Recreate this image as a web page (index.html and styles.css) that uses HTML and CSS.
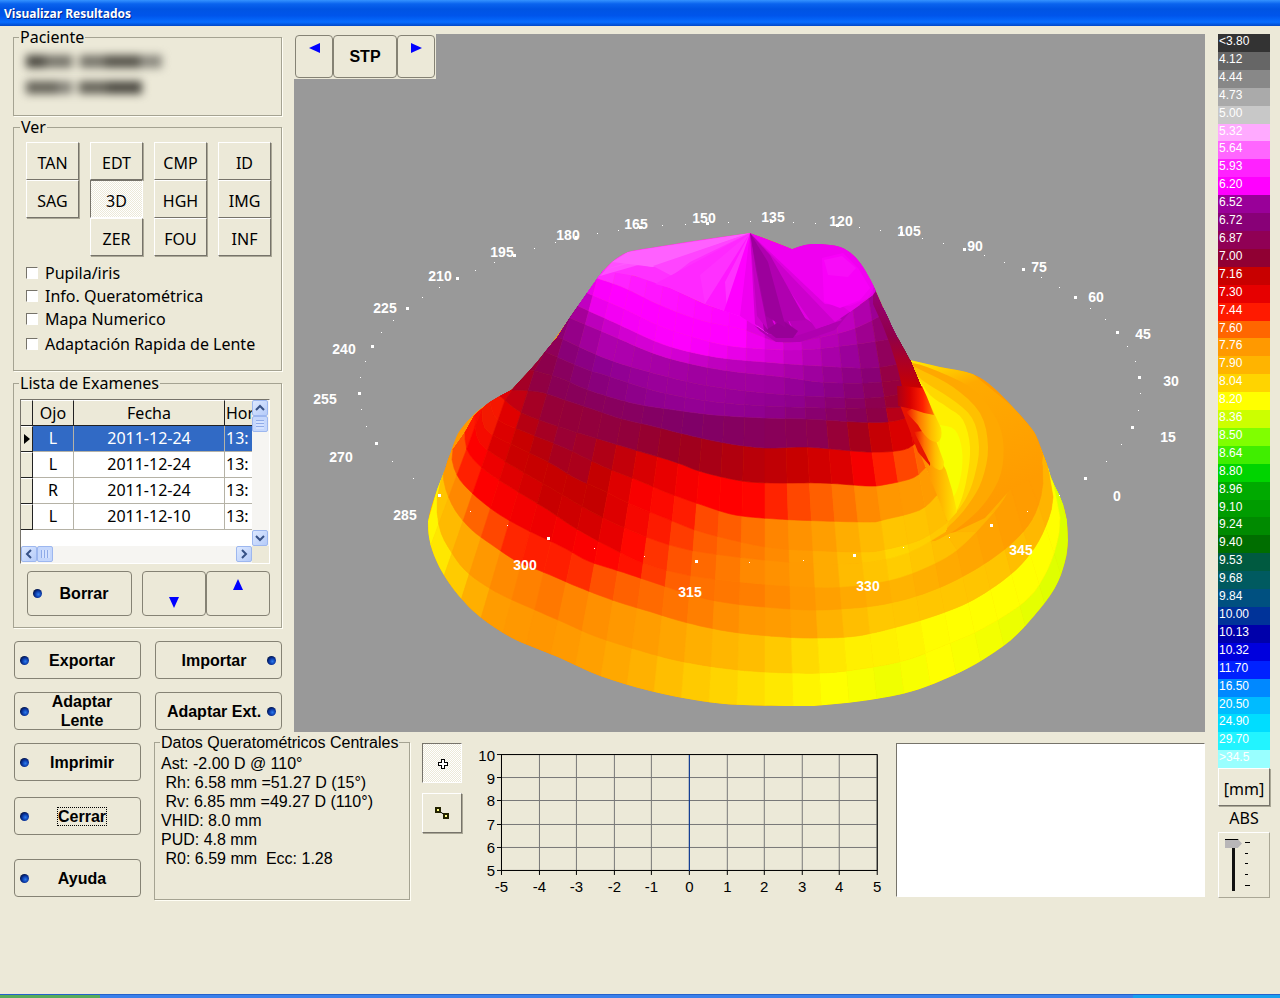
FILE: index.html
```html
<!DOCTYPE html>
<html lang="es">
<head>
<meta charset="utf-8">
<title>Visualizar Resultados</title>
<link rel="stylesheet" href="styles.css">
</head>
<body>
<header class="titlebar">Visualizar Resultados</header>
<main class="app">
  <div class="workspace">
    <div class="upper">
      <aside class="sidebar">
        <fieldset class="group patient">
          <legend>Paciente</legend>
          <div class="hidden-name hidden-name-long"></div>
          <div class="hidden-name"></div>
        </fieldset>
        <fieldset class="group views">
          <legend>Ver</legend>
          <div class="view-grid">
            <button>TAN</button><button>EDT</button><button>CMP</button><button>ID</button>
            <button>SAG</button><button class="pressed" aria-pressed="true">3D</button><button>HGH</button><button>IMG</button>
            <span></span><button>ZER</button><button>FOU</button><button>INF</button>
          </div>
          <div class="checks">
            <label><input type="checkbox">Pupila/iris</label>
            <label><input type="checkbox">Info. Queratométrica</label>
            <label><input type="checkbox">Mapa Numerico</label>
            <label class="last"><input type="checkbox">Adaptación Rapida de Lente</label>
          </div>
        </fieldset>
        <fieldset class="group exams">
          <legend>Lista de Examenes</legend>
          <div class="listbox">
            <div class="table-clip">
              <table>
                <thead><tr><th class="mark"></th><th class="eye">Ojo</th><th class="date">Fecha</th><th class="hour">Hor</th></tr></thead>
                <tbody>
                  <tr class="selected"><th class="mark"><svg width="6" height="10" viewBox="0 0 6 10"><path d="M0 0L6 5L0 10z"/></svg></th><td>L</td><td>2011-12-24</td><td class="hour">13:</td></tr>
                  <tr><th class="mark"></th><td>L</td><td>2011-12-24</td><td class="hour">13:</td></tr>
                  <tr><th class="mark"></th><td>R</td><td>2011-12-24</td><td class="hour">13:</td></tr>
                  <tr><th class="mark"></th><td>L</td><td>2011-12-10</td><td class="hour">13:</td></tr>
                </tbody>
              </table>
            </div>
            <div class="scroll vertical">
              <button aria-label="Subir"><svg viewBox="0 0 10 10"><path d="M1 7L5 3L9 7"/></svg></button>
              <span class="thumb"></span><span class="rail"></span>
              <button aria-label="Bajar"><svg viewBox="0 0 10 10"><path d="M1 3L5 7L9 3"/></svg></button>
            </div>
            <div class="scroll horizontal">
              <button aria-label="Izquierda"><svg viewBox="0 0 10 10"><path d="M7 1L3 5L7 9"/></svg></button>
              <span class="thumb"></span><span class="rail"></span>
              <button aria-label="Derecha"><svg viewBox="0 0 10 10"><path d="M3 1L7 5L3 9"/></svg></button>
            </div>
          </div>
          <div class="exam-actions">
            <button class="btn"><i class="led"></i><span>Borrar</span></button>
            <div class="pair">
              <button class="btn low" aria-label="Siguiente"><svg width="10" height="11" viewBox="0 0 10 11"><path d="M0 0H10L5 11z"/></svg></button>
              <button class="btn high" aria-label="Anterior"><svg width="10" height="11" viewBox="0 0 10 11"><path d="M0 11H10L5 0z"/></svg></button>
            </div>
          </div>
        </fieldset>
        <div class="side-actions">
          <button class="btn"><i class="led"></i><span>Exportar</span></button>
          <button class="btn right"><span>Importar</span><i class="led"></i></button>
          <button class="btn"><i class="led"></i><span>Adaptar<br>Lente</span></button>
          <button class="btn right"><span>Adaptar Ext.</span><i class="led"></i></button>
        </div>
      </aside>
      <section class="viewer">
        <svg class="map" id="map" viewBox="294 34 911 698" role="img" aria-label="Mapa corneal 3D"></svg>
        <div class="map-tools">
          <button class="btn arrow" aria-label="Girar a la izquierda"><svg width="11" height="10" viewBox="0 0 11 10"><path d="M11 0V10L0 5z"/></svg></button>
          <button class="btn stop">STP</button>
          <button class="btn arrow" aria-label="Girar a la derecha"><svg width="11" height="10" viewBox="0 0 11 10"><path d="M0 0V10L11 5z"/></svg></button>
        </div>
      </section>
    </div>
    <div class="lower">
      <div class="main-actions">
        <button class="btn"><i class="led"></i><span>Imprimir</span></button>
        <button class="btn close"><i class="led"></i><span><span class="focus">Cerrar</span></span></button>
        <button class="btn help"><i class="led"></i><span>Ayuda</span></button>
      </div>
      <fieldset class="group kerato">
        <legend>Datos Queratométricos Centrales</legend>
        <pre>Ast: -2.00 D @ 110°
 Rh: 6.58 mm =51.27 D (15°)
 Rv: 6.85 mm =49.27 D (110°)
VHID: 8.0 mm
PUD: 4.8 mm
 R0: 6.59 mm  Ecc: 1.28</pre>
      </fieldset>
      <div class="tools">
        <button class="pressed" aria-label="Punto"><svg width="11" height="11" viewBox="0 0 11 11"><path d="M4 1H7V4H10V7H7V10H4V7H1V4H4z" fill="#fff" stroke="#000" shape-rendering="crispEdges"/></svg></button>
        <button aria-label="Línea"><svg width="16" height="14" viewBox="0 0 16 14"><path d="M4 4L12 10" stroke="#000"/><path d="M2 2H6V6H2zM10 8H14V12H10z" fill="#ff8" stroke="#220" stroke-width="2"/></svg></button>
      </div>
      <svg class="chart" id="chart" viewBox="474 744 410 152" role="img" aria-label="Perfil"></svg>
      <div class="notes"></div>
    </div>
  </div>
  <aside class="scale">
    <ol id="scale"></ol>
    <button class="unit">[mm]</button>
    <label for="abs">ABS</label>
    <div class="slider">
      <input id="abs" type="range" min="0" max="4" value="0">
      <svg width="8" height="52" viewBox="0 0 8 52"><path d="M1 3.500H6M1 14.500H4M1 24.500H4M1 35.500H4M1 46.500H6" stroke="#000"/></svg>
    </div>
  </aside>
</main>
<footer class="taskbar"><span class="start"></span><span class="tasks"></span><span class="tray"></span></footer>
<script src="map.js"></script>
</body>
</html>
```
FILE: styles.css
```css
* { box-sizing: border-box; }
body { margin: 0; min-height: 100vh; display: flex; flex-direction: column; background: #ece9d8; color: #000; font: 16px/18px "Noto Sans", "Open Sans", sans-serif; }
button { font: inherit; color: inherit; padding: 0; margin: 0; }
.titlebar { height: 26px; padding-left: 4px; color: #fff; font: bold 12px/27px "Noto Sans", sans-serif; text-shadow: 1px 1px #00258c; background: linear-gradient(#3593ff, #0a63ee 15%, #0054e3 35%, #0055eb 60%, #066cff 85%, #0047c8); }
.app { flex: 1; display: flex; padding: 0 10px 0 13px; gap: 13px; }
.workspace { flex: 1; min-width: 0; }
.upper { display: flex; gap: 12px; }
.sidebar { width: 269px; padding-top: 2px; flex: none; }
.group { margin: 0; min-width: 0; border: 1px solid #a5a392; box-shadow: 1px 1px #fffef5; padding: 0; }
.group legend { margin-left: 5px; padding: 0 1px; height: 18px; white-space: nowrap; }
.patient { height: 88px; }
.hidden-name { width: 116px; height: 13px; margin: 13px 0 0 12px; filter: blur(4px); background: linear-gradient(90deg, #66645a 0 28%, #85837a 28% 40%, #dedbca 40% 46%, #66645a 46% 70%, #4c4a42 70%); }
.hidden-name-long { width: 136px; margin-top: 9px; background: linear-gradient(90deg, #4c4a42 0 14%, #77756b 14% 34%, #dedbca 34% 40%, #77756b 40% 58%, #55534a 58% 84%, #8c8a80 84%); }
.views { margin-top: 2px; height: 253px; padding: 6px 10px 0 12px; }
.group.views legend { margin-left: -6px; }
.view-grid { display: grid; grid-template-columns: repeat(4, 53px); grid-auto-rows: 38px; justify-content: space-between; }
.view-grid button, .unit, .tools button { background: #ece9d8; border: 1px solid; border-color: #fff #76736a #76736a #fff; box-shadow: 1px 1px #aaa796; border-radius: 0; }
.view-grid button { padding-top: 3px; }
.view-grid .pressed, .tools .pressed { border-color: #76736a #fff #fff #76736a; background: repeating-conic-gradient(#fff 0 25%, #ece9d8 0 50%) 0 0 / 2px 2px; box-shadow: none; }
.checks { padding-top: 5px; }
.checks label { display: flex; align-items: center; height: 23px; gap: 7px; white-space: nowrap; }
.checks .last { margin-top: 2px; }
.checks input { appearance: none; width: 12px; height: 12px; margin: 0; background: #fff; border: 1px solid; border-color: #76736a #fff #fff #76736a; }
.exams { margin-top: 3px; height: 254px; padding: 7px 11px 0 6px; }
.group.exams legend { margin-left: -1px; }
.listbox { display: grid; grid-template-columns: 1fr 17px; grid-template-rows: 146px 17px; height: 165px; border: 1px solid; border-color: #76736a #fff #fff #76736a; }
.table-clip { overflow: hidden; background: #fff; }
table { border-collapse: separate; border-spacing: 0; table-layout: fixed; width: 260px; }
th, td { height: 26px; padding: 0 0 1px; text-align: center; font-weight: normal; border-right: 1px solid #b5b2a6; border-bottom: 1px solid #b5b2a6; }
th { background: #ece9d8; border-color: #222; border-top: 1px solid #fff; }
.mark { width: 12px; }
.mark svg { display: block; margin: 0 auto; }
.eye { width: 41px; }
.date { width: 151px; }
.hour { text-align: left; padding-left: 1px; }
.selected td { background: #316ac5; color: #fff; }
.scroll { display: flex; background: #f6f5f2; }
.vertical { flex-direction: column; }
.scroll button, .thumb { width: 16px; height: 16px; flex: none; border: 1px solid #9db7ef; border-radius: 2px; background: linear-gradient(135deg, #dce8ff, #b5cbf9); display: grid; place-items: center; }
.scroll svg { width: 10px; fill: none; stroke: #365186; stroke-width: 2; }
.rail { flex: 1; }
.vertical .thumb { background: repeating-linear-gradient(#8fabe8 0 1px, #d4e2ff 1px 3px) center / 8px 9px no-repeat, #c5d7fc; }
.horizontal .thumb { background: repeating-linear-gradient(90deg, #8fabe8 0 1px, #d4e2ff 1px 3px) center / 9px 8px no-repeat, #c5d7fc; }
.btn { display: flex; align-items: center; height: 38px; padding: 0 5px; border: 1px solid #858274; border-radius: 4px; background: #ece9d8; font: bold 16px/19px "Liberation Sans", Arial, sans-serif; white-space: nowrap; }
.btn > span { flex: 1; text-align: center; }
.btn > svg { fill: #00f; }
.led { width: 9px; height: 9px; flex: none; border-radius: 50%; background: radial-gradient(circle at 60% 60%, #2c7cf0, #08329c 45%, #02123f 75%); }
.exam-actions { display: flex; justify-content: space-between; padding: 7px 0 0 7px; }
.exam-actions .btn { width: 105px; height: 45px; }
.exam-actions .pair { display: flex; }
.exam-actions .pair .btn { width: 64px; justify-content: center; padding: 7px 0; }
.pair .low { align-items: flex-end; }
.pair .high { align-items: flex-start; }
.side-actions { display: grid; grid-template-columns: 127px 127px; justify-content: space-between; gap: 13px 0; padding: 13px 0 0 1px; }
.viewer { position: relative; flex: 1; min-width: 0; margin-top: 8px; background: #999; }
.map { display: block; width: 100%; height: 698px; }
.map text { font: bold 14px "Liberation Sans", Arial, sans-serif; fill: #fff; text-anchor: middle; }
.map-tools { position: absolute; top: 0; left: 0; display: flex; padding: 1px; background: #ece9d8; }
.map-tools .btn { width: 38px; height: 43px; justify-content: center; }
.map-tools .btn.stop { width: 64px; }
.map-tools .arrow { align-items: flex-start; padding-top: 7px; }
.lower { display: flex; align-items: flex-start; gap: 12px; padding: 1px 0 0 1px; }
.main-actions { width: 127px; flex: none; padding-top: 10px; margin-right: 1px; display: flex; flex-direction: column; }
.main-actions .close { margin-top: 16px; }
.main-actions .help { margin-top: 24px; }
.focus { outline: 1px dotted #000; }
.kerato { width: 256px; height: 167px; flex: none; font: 16px/19px "Liberation Sans", Arial, sans-serif; }
.kerato pre { margin: 3px 0 0 6px; font: inherit; }
.tools { display: grid; gap: 10px; padding-top: 10px; flex: none; }
.tools button { width: 40px; height: 40px; display: grid; place-items: center; }
.chart { flex: 4; min-width: 0; height: 152px; margin-top: 11px; }
.chart text { font: 15px "Liberation Sans", Arial, sans-serif; }
.notes { flex: 3; height: 154px; margin-top: 10px; background: #fff; border: 1px solid; border-color: #76736a #fff #fff #76736a; }
.scale { width: 52px; flex: none; padding-top: 8px; display: flex; flex-direction: column; align-items: center; }
.scale ol { list-style: none; margin: 0; padding: 0; width: 100%; height: 734px; display: flex; flex-direction: column; }
.scale li { flex: 1; padding-left: 1px; color: #fff; font: 12px/14px "Liberation Sans", Arial, sans-serif; }
.unit { width: 52px; height: 38px; padding-top: 3px; }
.scale label { height: 26px; line-height: 24px; }
.slider { width: 52px; height: 66px; display: flex; align-items: center; padding-left: 6px; gap: 2px; border: 1px solid; border-color: #fff #aaa796 #aaa796 #fff; }
.slider input { appearance: none; writing-mode: vertical-lr; width: 17px; height: 52px; margin: 0; background: linear-gradient(#111, #111) center / 3px 100% no-repeat; }
.slider input::-webkit-slider-thumb { appearance: none; width: 17px; height: 9px; background: #b8b6b8; border-top: 1px solid #000; clip-path: polygon(0 0, 75% 0, 100% 50%, 75% 100%, 0 100%); }
.taskbar { height: 4px; display: flex; background: #3a80ea; border-top: 1px solid #2461cc; }
.start { width: 100px; background: #58ab5a; }
.tasks { flex: 1; }
.tray { width: 147px; background: #19a0ee; }
```
FILE: map.js
```js
const NS = 'http://www.w3.org/2000/svg';
function add(parent, tag, attrs, text) {
  const el = document.createElementNS(NS, tag);
  for (const k in attrs) el.setAttribute(k, attrs[k]);
  if (text !== undefined) el.textContent = text;
  parent.appendChild(el);
  return el;
}
const parse = s => s.trim().split(/\s+/).map(p => p.split(',').map(Number));
const show = pts => pts.map(q => q.map(v => v.toFixed(1)).join(',')).join(' ');
const map = document.getElementById('map');

/* Catmull-Rom value between b and c */
const spline = (a, b, c, d, t) => 0.5 * (2 * b + (c - a) * t + (2 * a - 5 * b + 4 * c - d) * t * t + (3 * b - a - 3 * c + d) * t * t * t);
function smooth(pts) {
  const out = [];
  for (let i = 0; i < pts.length - 1; i++) {
    const a = pts[Math.max(0, i - 1)], b = pts[i], c = pts[i + 1], d = pts[Math.min(pts.length - 1, i + 2)];
    for (let t = 0; t < 1; t += 0.25) out.push([0, 1].map(n => spline(a[n], b[n], c[n], d[n], t)));
  }
  out.push(pts[pts.length - 1]);
  return out;
}

/* Outline of the whole surface, in runs that meet at sharp corners */
const outline = show([
  '750,233 700,240 650,248 628,252 612,262 600,275 590,289 568,320 545,352 530,370 511,390',
  '511,390 490,402 475,413 460,430 453,445 444,472 435,495 429,515 428,530 432,550 442,572 458,595 480,617 510,637 540,650 560,658 600,676 650,691 700,701 740,705 800,706 826,705 870,700 910,692 943,680 976,664 1010,641 1035,615 1055,588 1065,562 1068,540 1066,515 1060,497 1052,480 1042,450 1033,430 1013,407 993,387 973,374 940,367 910,360',
  '910,360 895,333 883,307 873,285 863,267 853,255 840,247 820,244 805,245 792,249',
  '792,249 770,240 750,233'
].flatMap(s => smooth(parse(s))));
const defs = add(map, 'defs', {});
add(add(defs, 'clipPath', { id: 'body' }), 'polygon', { points: outline });
function gradient(id, stops, dir) {
  const g = add(defs, 'linearGradient', Object.assign({ id }, dir));
  stops.forEach(([o, c]) => add(g, 'stop', { offset: o, 'stop-color': c }));
}
gradient('flank', [[0, '#aa0018'], [0.35, '#d80000'], [0.7, '#ff2000'], [1, '#ff7700']], {});
gradient('lobe', [[0, '#ee1100'], [0.35, '#ff7700'], [0.7, '#ffbb00'], [1, '#ffe400']], {});
gradient('slope', [[0, '#ff7700'], [0.5, '#ffaa00'], [1, '#ffe400']], {});
gradient('back', [[0, '#ffff00'], [0.3, '#ffaa00'], [1, '#ff9900']], { x1: 0, y1: 0, x2: 0.3, y2: 1 });
gradient('edge', [[0, '#980080'], [0.5, '#900048'], [1, '#c80000']], { x1: 0, y1: 0, x2: 0, y2: 1 });

/* Ring boundaries from the rim towards the apex, and the colours along each ring */
const rings = [
  ['444,472 435,495 429,515 428,530 432,550 442,572 458,595 480,617 510,637 540,650 560,658 600,676 650,691 700,701 740,705 800,706 826,705 870,700 910,692 943,680 976,664 1010,641 1035,615 1055,588 1065,562 1068,540 1066,515 1060,497 1052,480',
   '428:ffff00 446:ffdd00 470:ffb400 500:ff9900 550:ff9600 590:ffa000 640:ffb000 690:ffc800 735:ffd800 790:ffec00 830:ffff00 890:f0ff00 940:ffff00 1000:f0ff00 1060:dcff00'],
  ['443,470 437,500 440,530 452,553 468,573 498,593 542,613 565,623 592,635 628,647 675,660 722,668 765,672 823,673 867,668 907,660 940,647 980,630 1023,603 1042,580 1055,550 1060,517 1052,477',
   '437:ffc800 455:ffb400 475:ffa000 500:ff8c00 550:ff7800 580:ff8800 610:ff9600 660:ffa000 700:ffb000 765:ffc000 810:ffdd00 850:fff000 900:fff200 940:ffff00 1050:ffff00'],
  ['443,470 445,487 455,510 472,530 495,547 518,562 538,570 562,580 578,587 615,601 648,611 688,623 732,632 783,637 820,638 857,636 897,627 937,615 973,600 1010,575 1033,550 1047,523 1053,497 1048,467',
   '443:ffa000 460:ff8800 475:ff6600 500:ff4000 520:ff1e00 575:ff1e00 590:ff4800 625:ff6000 690:ff7800 740:ff9600 800:ffa000 840:ffb800 880:ffc800 1000:ffc400 1045:ffb400'],
  ['453,450 452,460 458,477 472,493 497,513 525,529 548,540 568,550 588,561 622,572 655,583 698,597 735,604 777,608 810,610 840,609 880,605 920,595 960,578 1000,553 1027,527 1040,500 1043,470 1036,440',
   '452:ff8800 458:ff5500 466:ff2800 480:ff0000 540:ee0000 600:ff0000 640:ff1800 665:ff5500 700:ff7000 760:ff8000 800:ff9600 850:ffa800 900:ffb400 1000:ffa000 1040:ff9900'],
  ['465,433 467,450 482,468 510,487 548,510 575,528 615,550 648,565 692,576 740,582 790,586 840,587 890,580 927,567 957,550 987,520 1007,493 1013,463 1008,425',
   '465:ff3300 475:ff0000 500:e60000 550:c80000 600:d80000 630:ff0000 665:ff4400 700:ff6600 750:ff8800 800:ff9900 850:ffbb00 900:ffcc00 950:ffbe00 1010:ff9c00'],
  ['475,415 478,440 498,457 542,483 592,512 625,528 660,542 700,552 765,560 823,564 870,562 910,552 945,532',
   '477:ff1000 495:dd0000 520:c80000 600:c40000 630:f40000 665:ff2000 700:ff5800 740:ff7400 780:ff8c00 820:ffa800 860:ffc000 900:ffd800 940:ffc800'],
  ['482,409 486,430 515,446 550,463 575,478 602,490 628,503 665,518 695,530 732,540 773,548 823,551 863,552 883,550 920,540 948,522',
   '482:ff3000 495:e60000 530:c00000 570:a00028 600:c40000 640:f80000 680:ff1000 700:ff4400 740:ff6600 780:ff8800 820:ff9c00 860:ffb400 900:ffc800 940:ffbe00'],
  ['490,402 498,420 530,434 565,448 602,466 642,482 668,493 702,505 735,515 777,519 823,521 873,522 883,520 920,510 937,495',
   '490:ff2000 510:e00000 530:b00014 570:980038 610:b40010 650:dd0000 700:ff0000 750:ff0000 780:ff2800 805:ff5000 840:ff7000 880:ff9600 935:ff9c00'],
  ['500,396 520,412 548,423 575,432 602,440 635,450 675,462 702,472 742,481 773,483 823,483 867,486 883,485 913,478 925,468',
   '500:ee0000 522:b00018 550:960038 620:900040 680:9c0020 740:b4000c 800:c80000 850:e00000 870:ff0000 895:ff3000 922:ff6600'],
  ['512,390 540,392 565,400 592,409 622,419 648,425 688,435 725,443 765,448 807,447 867,452 903,450 917,442',
   '512:c00000 530:960038 560:880058 620:880060 690:800068 760:88005c 820:8c0050 862:a80018 885:cc0000 917:e60000'],
  ['530,370 560,378 588,390 632,403 668,409 715,415 765,418 807,419 857,422 887,422 907,418 917,414',
   '530:a00028 548:8a0050 590:880078 650:900090 700:940094 760:900090 800:8a0078 855:880058 885:900040 905:d00000 930:ff2000'],
  ['545,352 588,370 602,374 635,385 668,394 715,402 765,406 823,408 873,408 905,407 928,403',
   '545:980038 560:880070 600:8c0090 650:9a009a 720:9a009a 790:900090 850:880068 890:900040 910:b40010'],
  ['558,337 602,357 635,368 680,380 715,387 765,393 823,397 873,398 922,390',
   '558:880068 578:980090 610:b000b0 655:a800a8 700:a000a0 770:a000a0 820:8c0090 870:880068 910:a00020'],
  ['570,318 615,337 645,350 675,360 722,370 783,377 820,382 867,383 917,378',
   '570:900070 585:b400b4 620:d000d0 670:d800d8 710:c000c0 770:b400b4 820:9c009c 870:880078 905:a00020'],
  ['578,306 620,325 665,345 715,357 765,362 820,366 873,368 910,361',
   '578:b000b0 600:f000f0 680:ff00ff 720:f000f0 770:d800d8 810:b800b8 860:940094 900:900040'],
  ['587,293 620,307 665,328 715,343 750,348 800,350 850,345 898,338',
   '587:e000e0 605:ff00ff 740:ff00ff 765:e400e4 805:c400c4 850:a800a8 890:900068'],
  ['597,278 625,288 660,305 700,320 745,330 775,341 800,341 850,330 886,313',
   '597:ff30ff 640:ff18ff 740:ff00ff 765:d000d0 800:b400b4 850:c000c0 880:980090'],
  ['604,270 635,276 670,288 705,304 745,318 768,334 790,337 830,324 873,295', '']
].map(([pts, cols]) => ({
  pts: smooth(parse(pts)),
  cols: cols ? cols.split(' ').map(c => {
    const [x, h] = c.split(':');
    return [Number(x), [0, 2, 4].map(i => parseInt(h.slice(i, i + 2), 16))];
  }) : []
}));

/* Even steps along a polyline */
function byLength(pts, n) {
  if (pts.length < 2) return Array(n + 1).fill(pts[0]);
  const len = [0];
  for (let i = 1; i < pts.length; i++) len.push(len[i - 1] + Math.hypot(pts[i][0] - pts[i - 1][0], pts[i][1] - pts[i - 1][1]));
  const out = [];
  let j = 1;
  for (let k = 0; k <= n; k++) {
    const d = len[len.length - 1] * k / n;
    while (j < pts.length - 1 && len[j] < d) j++;
    const t = (d - len[j - 1]) / (len[j] - len[j - 1] || 1);
    out.push([0, 1].map(m => pts[j - 1][m] + t * (pts[j][m] - pts[j - 1][m])));
  }
  return out;
}
/* Meridians fan out from a far point above the surface */
const slope = p => (p[0] - 765) / (p[1] + 350);
function byMeridian(pts, n) {
  const out = [];
  let j = 1;
  for (let k = 0; k <= n; k++) {
    const s = -0.4 + 0.8 * k / n;
    while (j < pts.length - 1 && slope(pts[j]) < s) j++;
    const s0 = slope(pts[j - 1]), s1 = slope(pts[j]);
    const t = Math.max(0, Math.min(1, (s - s0) / (s1 - s0)));
    out.push([0, 1].map(m => pts[j - 1][m] + t * (pts[j][m] - pts[j - 1][m])));
  }
  return out;
}
const FINE = 4;
function resample(pts) {
  let l = 0, r = 0;
  pts.forEach((p, i) => {
    if (slope(p) < slope(pts[l])) l = i;
    if (slope(p) > slope(pts[r])) r = i;
  });
  return byLength(pts.slice(0, l + 1), 3 * FINE)
    .concat(byMeridian(pts.slice(l, r + 1), 30 * FINE).slice(1))
    .concat(byLength(pts.slice(r), 3 * FINE).slice(1));
}
function colourAt(cols, x) {
  let i = 1;
  while (i < cols.length - 1 && cols[i][0] < x) i++;
  const [x0, a] = cols[i - 1], [x1, b] = cols[i];
  const t = Math.max(0, Math.min(1, (x - x0) / (x1 - x0)));
  return `rgb(${a.map((v, n) => Math.round(v + t * (b[n] - v))).join(',')})`;
}
const surface = add(map, 'g', { 'clip-path': 'url(#body)' });
add(surface, 'polygon', { points: outline, fill: '#ff9900' });
const poly = (points, fill) => add(surface, 'polygon', { points, fill });

function drawRing(i) {
  const a = resample(rings[i].pts), b = resample(rings[i + 1].pts);
  for (let s = 0; s + FINE < a.length; s += FINE) {
    const e = s + FINE;
    const c = colourAt(rings[i].cols, (a[s + 2][0] + b[s + 2][0]) / 2);
    add(surface, 'polygon', { points: show(a.slice(s, e + 1).concat(b.slice(s, e + 1).reverse())), fill: c, stroke: c, 'stroke-width': 0.6 });
  }
}
for (let i = 0; i < 5; i++) drawRing(i);

/* Hollow on the right-hand side */
poly('900,350 973,374 1013,407 1035,433 1043,455 1041,475 1010,490 985,518 955,532 930,538 900,500', 'url(#back)');
const bowl = (points, fill) => poly(show(smooth(parse(points))), fill);
bowl('905,362 927,367 970,387 993,413 1003,440 1001,473 987,500 968,520 945,536 925,538 900,490', '#ffa800');
bowl('905,362 925,372 953,387 980,413 988,447 982,480 968,505 950,525 935,532 905,480', '#ffc000');
bowl('905,362 922,380 950,398 972,418 979,447 974,478 965,500 952,516 935,524 905,470', '#ffd800');
bowl('905,370 915,374 930,395 947,407 963,420 970,447 967,477 960,503 951,513 930,490 905,440', '#fff000');
bowl('940,425 955,430 962,450 961,475 954,496 945,490 940,460', '#f8ff00');
for (let i = 5; i < rings.length - 1; i++) drawRing(i);

/* Folds along the steep right flank */
const path = (d, fill) => add(surface, 'path', { d, fill });
path('M915 440L925 466L937 495L948 522L957 512Q953 490 946 470L930 440z', 'url(#slope)');
path('M900 405H924L932 434L930 466L918 452z', '#e81400');
path('M914 432L926 455Q931 468 939 470Q944 471 944 462L932 430z', 'url(#lobe)');
path('M906 412L918 425Q928 443 938 442Q943 438 941 428L928 400z', 'url(#lobe)');
path('M897 386L922 386L927 397L934 415Q922 413 912 409L898 406z', 'url(#flank)');
path('M873 284L883 307L895 333L910 360L922 388L902 386Q893 345 873 304z', 'url(#edge)');

/* Apex: narrow facets that meet in one point */
poly('735,305 760,331 776,342 800,342 835,330 850,312', '#b000b0');
poly('750,233 700,236 650,244 620,250 600,270 635,276 670,288 705,304 745,318 768,334', '#ff30ff');
poly('750,233 792,249 815,240 850,247 880,285 873,295 830,324 790,337 768,334', '#e000e0');
[['600,276 612,262 628,252 650,248', '#ff50ff'], ['604,270 628,262 652,267', '#ff58ff'], ['628,252 612,262 653,267', '#ff60ff'],
 ['653,266 672,276 690,262', '#ff44ff'], ['655,284 670,288 705,304 700,275', '#ff28ff'],
 ['705,304 727,312 725,282', '#ff18ff'], ['724,311 745,318 748,321', '#ff00ff'],
 ['740,316 757,327 757,300', '#f000f0'], ['755,324 769,334 775,332', '#d000d0'],
 ['764,331 769,334 781,336 773,322', '#a400a4'], ['779,336 800,335 790,325', '#a800a8'],
 ['796,336 820,328 805,318', '#b800b8'], ['816,329 842,320 830,309', '#cc00cc'],
 ['835,322 860,305 845,295', '#dd00dd'], ['850,312 873,295 873,280 792,249', '#e800e8']
].forEach(([p, c]) => poly('750,233 ' + p, c));
poly('750,233 792,249 812,242 842,245 862,260 875,285 868,298 850,306 825,304', '#f000f0');
poly('822,258 843,253 858,268 870,288 860,300 840,308 824,302', '#f800f8');
poly('824,260 842,256 856,268 848,277 828,275', '#f80cf8');
poly('766,330 782,320 798,331 793,338 776,338', '#980098');
poly('750,233 770,255 806,320 779,322', '#b000b0');
poly('750,233 768,262 786,328 766,316', '#9c009c');
poly('750,233 756,270 768,330 757,316', '#c000c0');

/* Meridian marks */
const big = parse('1085,478 1132,427 1139,377 1117,332 1075,297 1023,269 964,249 901,233 837,225 771,221 707,223 640,227 576,237 514,255 457,278 407,308 372,346 359,393 376,443 439,495 548,538 696,561 854,555 991,525');
const labels = [[1117,501],[1168,442],[1171,386],[1143,339],[1096,302],[1039,272],[975,251],[909,236],[841,226],[773,222],[704,223],[636,229],[568,240],[502,257],[440,281],[385,313],[344,354],[325,404],[341,462],[405,520],[525,570],[690,597],[868,591],[1021,555]];
big.forEach((p, i) => {
  add(map, 'rect', { x: p[0] - 1, y: p[1] - 1, width: 3, height: 3, fill: '#fff' });
  const n = big.length, a = big[(i + n - 1) % n], q = big[(i + 1) % n], r = big[(i + 2) % n];
  [1 / 3, 2 / 3].forEach(t => {
    const [x, y] = [0, 1].map(m => Math.round(spline(a[m], p[m], q[m], r[m], t)));
    add(map, 'rect', { x, y, width: 1, height: 1, fill: '#fff' });
  });
  add(map, 'text', { x: labels[i][0], y: labels[i][1] }, i * 15);
});

/* Profile chart */
const chart = document.getElementById('chart');
for (let i = 0; i <= 10; i++) {
  const x = Math.round(501 + i * 37.6) + 0.5;
  add(chart, 'path', { d: `M${x} 755V871`, stroke: '#777' });
  add(chart, 'path', { d: `M${x} 871V875`, stroke: '#000' });
  add(chart, 'text', { x, y: 892, 'text-anchor': 'middle' }, i - 5);
}
for (let i = 0; i <= 5; i++) {
  const y = Math.round(754 + i * 23.2) + 0.5;
  add(chart, 'path', { d: `M501 ${y}H877`, stroke: '#777' });
  add(chart, 'path', { d: `M497 ${y}H501`, stroke: '#000' });
  add(chart, 'text', { x: 495, y: y + 6, 'text-anchor': 'end' }, 10 - i);
}
add(chart, 'rect', { x: 501.5, y: 754.5, width: 376, height: 116, fill: 'none', stroke: '#000' });
add(chart, 'path', { d: 'M689.5 755V871', stroke: '#003399' });

/* Colour scale */
const scale = '<3.80:333333 4.12:666666 4.44:888888 4.73:aaaaaa 5.00:c8c8c8 5.32:ffaaff 5.64:ff66ff 5.93:ff22ff 6.20:ff00ff 6.52:990099 6.72:880077 6.87:900055 7.00:900033 7.16:c80000 7.30:e60000 7.44:ff1a00 7.60:ff6600 7.76:ff9900 7.90:ffb400 8.04:ffd400 8.20:ffff00 8.36:ccff00 8.50:80ff00 8.64:40ee00 8.80:00d400 8.96:00aa00 9.10:009c00 9.24:008a00 9.40:006e00 9.53:005a40 9.68:005a60 9.84:005080 10.00:003399 10.13:0000aa 10.32:0000dd 11.70:0022ff 16.50:0088ff 20.50:00bbff 24.90:00ddff 29.70:22f4ff >34.5:99ffff';
scale.split(' ').forEach(s => {
  const [label, colour] = s.split(':');
  const li = document.createElement('li');
  li.textContent = label;
  li.style.background = '#' + colour;
  document.getElementById('scale').appendChild(li);
});
```
